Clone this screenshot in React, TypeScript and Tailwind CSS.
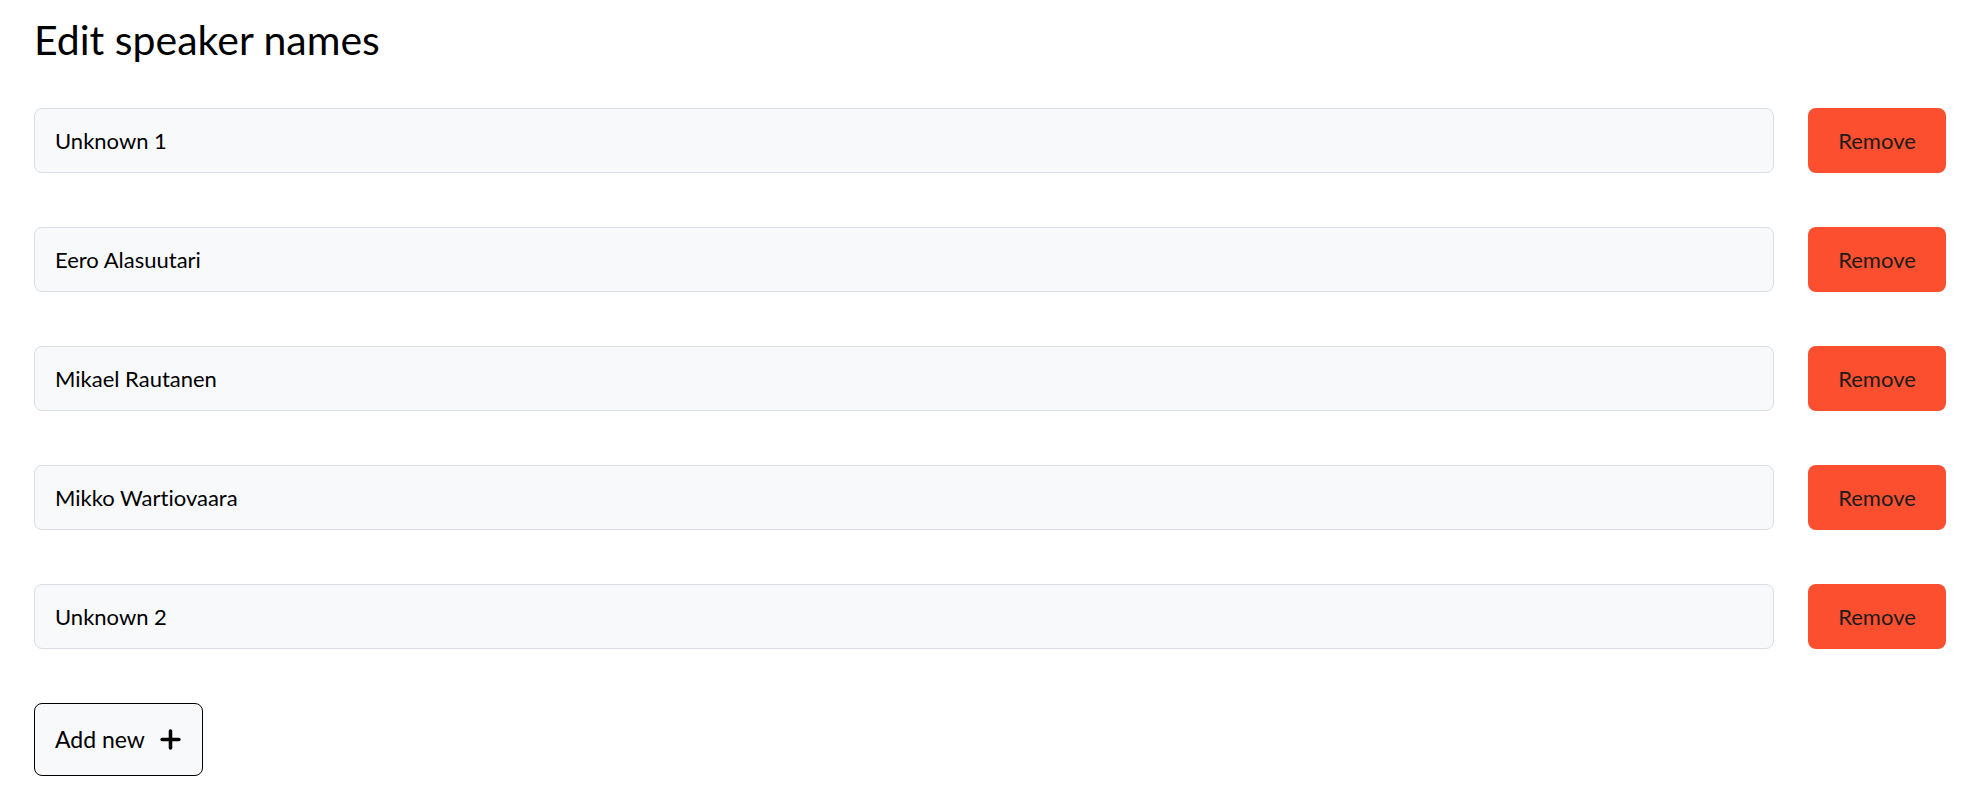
import { useState } from 'react'

const initialSpeakers = ['Unknown 1', 'Eero Alasuutari', 'Mikael Rautanen', 'Mikko Wartiovaara', 'Unknown 2']

export default function App() {
  const [speakers, setSpeakers] = useState(initialSpeakers)

  return (
    <div
      className="min-h-screen bg-white pl-[34px] pr-[30px] pt-[14px] text-black [font-variant-ligatures:none]"
      style={{ fontFamily: 'Lato, "Noto Sans", sans-serif' }}
    >
      <h1 className="text-[41px] leading-[52px] font-normal">Edit speaker names</h1>

      <div className="mt-[42px] flex flex-col gap-[54px]">
        {speakers.map((name, i) => (
          <div key={i} className="flex items-center gap-[34px]">
            <input
              value={name}
              onChange={(e) => setSpeakers(speakers.map((s, j) => (j === i ? e.target.value : s)))}
              className="h-[65px] flex-1 rounded-[8px] border border-[#dadde3] bg-[#f8f9fb] px-[20px] text-[22px] text-black outline-none [font-variant-ligatures:none]"
            />
            <button
              onClick={() => setSpeakers(speakers.filter((_, j) => j !== i))}
              className="h-[65px] w-[138px] rounded-[8px] bg-[#fb4f2f] text-[22px] text-[#1c1c1c]"
            >
              Remove
            </button>
          </div>
        ))}
      </div>

      <button
        onClick={() => setSpeakers([...speakers, ''])}
        className="mt-[54px] flex h-[73px] w-[169px] items-center gap-[15px] rounded-[8px] border border-black bg-[#f8f9fb] pl-[20px] text-[23px] text-black"
      >
        Add new
        <svg width="21" height="21" viewBox="0 0 20 20" fill="none">
          <path d="M10 2v16M2 10h16" stroke="black" strokeWidth="3.4" strokeLinecap="round" />
        </svg>
      </button>
    </div>
  )
}
